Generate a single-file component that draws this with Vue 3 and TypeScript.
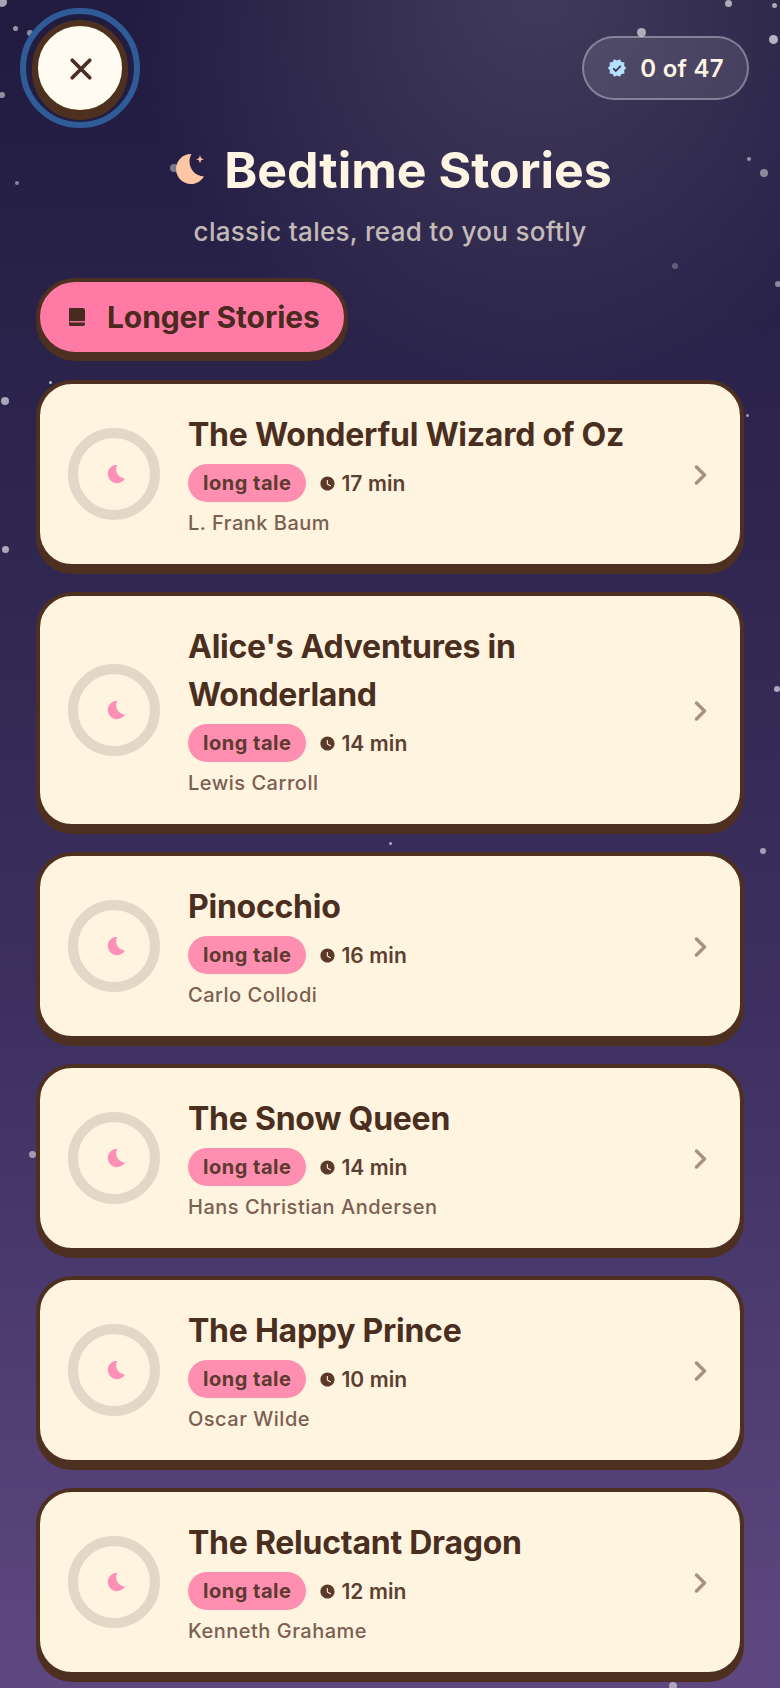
<script setup lang="ts">
interface Story { title: string; mins: number; author: string }
interface Star { x: number; y: number; r: number; o: number }

const stories: Story[] = [
  { title: 'The Wonderful Wizard of Oz', mins: 17, author: 'L. Frank Baum' },
  { title: "Alice's Adventures in Wonderland", mins: 14, author: 'Lewis Carroll' },
  { title: 'Pinocchio', mins: 16, author: 'Carlo Collodi' },
  { title: 'The Snow Queen', mins: 14, author: 'Hans Christian Andersen' },
  { title: 'The Happy Prince', mins: 10, author: 'Oscar Wilde' },
  { title: 'The Reluctant Dragon', mins: 12, author: 'Kenneth Grahame' },
]

const stars: Star[] = [
  { x: 2, y: 2, r: 5, o: 0.6 }, { x: 15, y: 28, r: 2.5, o: 0.55 }, { x: 30, y: 33, r: 3, o: 0.5 },
  { x: 2, y: 95, r: 3, o: 0.5 }, { x: 17, y: 183, r: 2, o: 0.45 }, { x: 174, y: 168, r: 4, o: 0.4 },
  { x: 728, y: 3, r: 3.5, o: 0.6 }, { x: 774, y: 5, r: 2.5, o: 0.6 }, { x: 641, y: 32, r: 4.5, o: 0.6 },
  { x: 773, y: 39, r: 4.5, o: 0.65 }, { x: 749, y: 159, r: 2, o: 0.5 }, { x: 764, y: 173, r: 4, o: 0.45 },
  { x: 675, y: 266, r: 3, o: 0.25 }, { x: 778, y: 284, r: 3, o: 0.45 }, { x: 5, y: 401, r: 4, o: 0.6 },
  { x: 5, y: 549, r: 3.5, o: 0.6 }, { x: 50, y: 382, r: 1.5, o: 0.7 }, { x: 777, y: 689, r: 3, o: 0.6 },
  { x: 763, y: 851, r: 3, o: 0.55 }, { x: 390, y: 843, r: 1.5, o: 0.6 }, { x: 81, y: 801, r: 1.5, o: 0.6 },
  { x: 32, y: 1154, r: 3.5, o: 0.5 }, { x: 673, y: 1686, r: 4, o: 0.5 }, { x: 747, y: 415, r: 1.5, o: 0.55 },
]

function starStyle(s: Star) {
  return { left: `${s.x - s.r}px`, top: `${s.y - s.r}px`, width: `${s.r * 2}px`, height: `${s.r * 2}px`, opacity: s.o }
}
</script>

<template>
  <div class="page">
    <span v-for="(s, i) in stars" :key="i" class="star" :style="starStyle(s)"></span>

    <header class="top">
      <button class="close" aria-label="Close">
        <svg viewBox="0 0 24 24" width="30" height="30"><path d="M5 5l14 14M19 5L5 19" fill="none" stroke="currentColor" stroke-width="3" stroke-linecap="round" /></svg>
      </button>
      <div class="count">
        <svg viewBox="0 0 24 24" width="20" height="20">
          <path fill="#b5dfff" d="M23 12l-2.440-2.790.340-3.690-3.610-.820-1.890-3.200L12 2.960 8.600 1.500 6.710 4.690 3.100 5.500l.340 3.700L1 12l2.440 2.790-.340 3.700 3.610.820L8.600 22.500l3.400-1.470 3.400 1.460 1.890-3.190 3.610-.820-.340-3.690L23 12z" />
          <path fill="none" stroke="#3c3a55" stroke-width="2.200" d="M7.500 12.500l3 3 6-6" />
        </svg>
        <span>0 of 47</span>
      </div>
    </header>

    <div class="heading">
      <h1>
        <svg class="moon" viewBox="2 2 20 20" width="30" height="30">
          <path fill="#ffc6a6" d="M12.340 2.020C6.590 1.820 2 6.420 2 12c0 5.520 4.480 10 10 10 3.710 0 6.930-2.020 8.660-5.020-7.510-.250-12.090-8.430-8.320-14.960z" />
          <path fill="#ffc6a6" d="M18 2.900l.7 1.900 1.900.7-1.900.7-.7 1.900-.7-1.900-1.900-.7 1.900-.7z" />
        </svg>
        <span>Bedtime Stories</span>
      </h1>
      <p>classic tales, read to you softly</p>
    </div>

    <div class="section">
      <div class="chip">
        <svg viewBox="0 0 18 18" width="18" height="18">
          <path fill="#4a2a20" d="M2 0h13a2 2 0 0 1 2 2v14a2 2 0 0 1-2 2H2.500A1.500 1.500 0 0 1 1 16.500V1a1 1 0 0 1 1-1z" />
          <path d="M1.500 13.800H17" stroke="#ff7ba6" stroke-width="1.300" />
        </svg>
        <span>Longer Stories</span>
      </div>
    </div>

    <ul class="list">
      <li v-for="s in stories" :key="s.title" class="card">
        <div class="ring">
          <svg class="ring-moon" viewBox="0 0 24 24" width="22" height="22"><path fill="#ff8fb4" d="M12.340 2.020C6.590 1.820 2 6.420 2 12c0 5.520 4.480 10 10 10 3.710 0 6.930-2.020 8.660-5.020-7.510-.250-12.090-8.430-8.320-14.960z" /></svg>
        </div>
        <div class="body">
          <h2>{{ s.title }}</h2>
          <div class="meta">
            <span class="tag">long tale</span>
            <svg viewBox="0 0 24 24" width="17" height="17"><path fill="#5c3a2a" d="M12 2C6.500 2 2 6.500 2 12s4.500 10 10 10 10-4.500 10-10S17.500 2 12 2zm4.200 14.200L11 13V7h1.500v5.200l4.500 2.700-.8 1.300z" /></svg>
            <span class="mins">{{ s.mins }} min</span>
          </div>
          <div class="author">{{ s.author }}</div>
        </div>
        <svg class="chev" viewBox="0 0 14 20" width="14" height="20"><path d="M2.500 2L10.500 10l-8 8" fill="none" stroke="#a89182" stroke-width="3.400" stroke-linecap="round" stroke-linejoin="round" /></svg>
      </li>
    </ul>
  </div>
</template>

<style>
html, body { margin: 0; padding: 0; background: #231d43; }
</style>

<style scoped>
.page {
  position: relative;
  width: 780px;
  height: 1688px;
  overflow: hidden;
  box-sizing: border-box;
  padding-top: 20px;
  font-family: Inter, "Noto Sans", sans-serif;
  background:
    radial-gradient(ellipse 420px 420px at 540px -30px, rgba(255, 255, 255, 0.15), rgba(255, 255, 255, 0) 100%),
    linear-gradient(180deg, #211b40 0%, #2c244c 25%, #3d3060 60%, #5f4880 100%);
}
.star { position: absolute; border-radius: 50%; background: #fff; }
.top {
  position: relative;
  display: flex;
  justify-content: space-between;
  align-items: center;
  padding: 0 31px 0 32px;
}
.close {
  width: 96px;
  height: 96px;
  box-sizing: border-box;
  border: 6px solid #4d3020;
  border-radius: 50%;
  padding: 2px 0 0 2px;
  background: #fffbf0;
  color: #4a2e20;
  box-shadow: 0 4px 0 #4d3020;
  outline: 6px solid #2f5c98;
  outline-offset: 6px;
  display: flex;
  align-items: center;
  justify-content: center;
}
.count {
  display: flex;
  align-items: center;
  gap: 13px;
  height: 64px;
  box-sizing: border-box;
  padding: 0 23px;
  border: 2px solid rgba(255, 255, 255, 0.32);
  border-radius: 32px;
  background: rgba(255, 255, 255, 0.1);
  color: #fff5e2;
  font-size: 24px;
  font-weight: 600;
  letter-spacing: 0.3px;
}
.heading { position: relative; text-align: center; margin-top: 18px; }
h1 {
  margin: 0;
  display: flex;
  justify-content: center;
  align-items: center;
  gap: 18px;
  padding-left: 8px;
  color: #fff5e2;
  font-size: 50px;
  line-height: 72px;
  font-weight: 700;
}
.moon { margin-top: -3px; }
.heading p {
  margin: 9px 0 0;
  font-size: 26px;
  line-height: 34px;
  font-weight: 500;
  letter-spacing: 0.3px;
  color: rgba(255, 245, 226, 0.72);
}
.section { position: relative; display: flex; padding: 0 36px; margin-top: 29px; }
.chip {
  display: flex;
  align-items: center;
  gap: 21px;
  height: 78px;
  box-sizing: border-box;
  padding: 0 24px 0 28px;
  border: 4px solid #4d3020;
  border-radius: 39px;
  background: #ff7ba6;
  box-shadow: 0 5px 0 #4d3020;
  color: #4a2a20;
  font-size: 30px;
  font-weight: 700;
  letter-spacing: -0.1px;
}
.list {
  position: relative;
  list-style: none;
  margin: 24px 0 0;
  padding: 0 36px;
  display: flex;
  flex-direction: column;
  gap: 24px;
}
.card {
  display: flex;
  align-items: center;
  box-sizing: border-box;
  padding: 26px 28px 27px;
  border: 4px solid #4d3020;
  border-radius: 36px;
  background: #fff4e0;
  box-shadow: 0 6px 0 #4d3020;
}
.ring {
  flex: none;
  width: 92px;
  height: 92px;
  box-sizing: border-box;
  border: 10px solid #e3d8c7;
  border-radius: 50%;
  display: flex;
  align-items: center;
  justify-content: center;
}
.ring-moon { margin-left: 5px; }
.body { flex: 1; min-width: 0; margin: 0 28px; }
h2 {
  margin: 1px 0 0;
  color: #4a2e20;
  font-size: 32px;
  line-height: 48px;
  font-weight: 700;
  letter-spacing: -0.25px;
}
.meta { display: flex; align-items: center; margin-top: 5px; height: 38px; }
.tag {
  display: flex;
  align-items: center;
  height: 38px;
  padding: 0 15px;
  border-radius: 19px;
  background: #ff8fb0;
  color: #5c3a30;
  font-size: 20px;
  font-weight: 700;
  letter-spacing: 0.5px;
  margin-right: 13px;
}
.mins {
  margin-left: 5px;
  color: #5c3f30;
  font-size: 21px;
  font-weight: 600;
  letter-spacing: 0.1px;
}
.author {
  margin-top: 7px;
  color: #7b5f50;
  font-size: 20px;
  line-height: 28px;
  font-weight: 500;
  letter-spacing: 0.5px;
}
.chev { flex: none; margin: 2px 4px 0 0; }
</style>
